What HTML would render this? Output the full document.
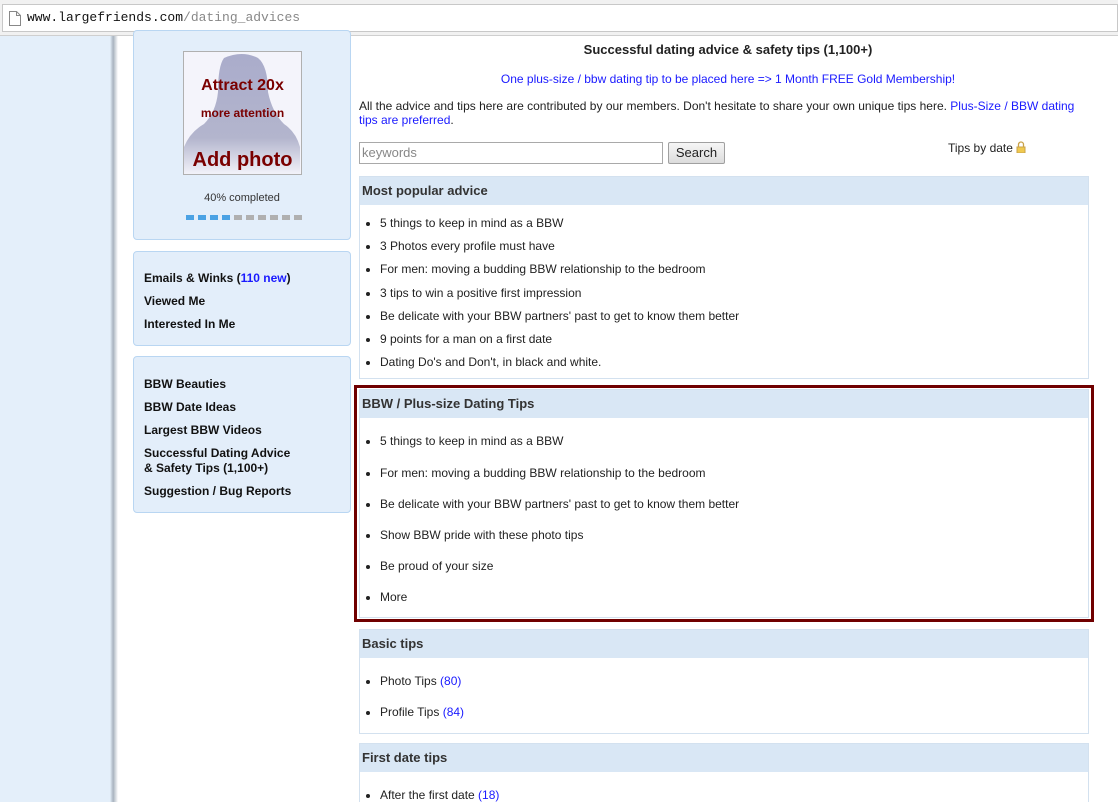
<!DOCTYPE html>
<html style="overflow:hidden"><head><meta charset="utf-8"><style>
*{margin:0;padding:0;box-sizing:border-box}
html,body{width:1118px;height:802px;overflow:hidden}
body{background:#fff;font-family:"Liberation Sans",Arial,sans-serif;font-size:12px;color:#222;position:relative}
.a{position:absolute}
.bar{left:0;top:0;width:1118px;height:36px;background:#f1f1f1;border-bottom:1px solid #cfcfcf}
.url{left:2px;top:4px;width:1116px;height:28px;background:#fff;border:1px solid #c8c8c8;font-family:"Liberation Mono",monospace;font-size:13px;line-height:26px;padding-left:24px;color:#111}
.side{left:0;top:36px;width:115px;height:766px;background:#e4effa}
.shadow{left:110px;top:36px;width:8px;height:766px;background:linear-gradient(90deg,#e4effa,#a9b3bf 40%,#fff)}
.box{background:#e3eefa;border:1px solid #b9d6f2;border-radius:4px;left:133px;width:218px}
.box b{display:block;position:absolute;left:10px;font-size:12px;color:#111}
.sec{left:359px;width:730px;border:1px solid #d3e1ef}
.sec h3{background:#d9e7f5;font-size:13px;height:28px;line-height:28px;padding-left:2px;color:#333}
.sec li{position:absolute;left:20px;font-size:12px;list-style:disc}
a{color:#1a1aff;text-decoration:none}
</style></head><body>
<div class="a bar"></div>
<div class="a url"><svg class="a" style="left:6px;top:6px" width="12" height="15"><path d="M.5 .5h7l4 4v10h-11z" fill="#fff" stroke="#888"/><path d="M7.5 .5v4h4" fill="none" stroke="#888"/></svg>www.largefriends.com<span style="color:#888">/dating_advices</span></div>
<div class="a side"></div><div class="a shadow"></div>

<div class="a box" style="top:30px;height:210px">
 <div class="a" style="left:49px;top:20px;width:119px;height:124px;border:1px solid #b0b0b0;background:#f4f4fb;overflow:hidden">
  <svg class="a" style="left:0;top:0" width="117" height="122"><defs><linearGradient id="g" x1="0" y1="0" x2="0" y2="1"><stop offset="0" stop-color="#aaaccb"/><stop offset=".7" stop-color="#b3b5cd"/><stop offset="1" stop-color="#f2f2f9"/></linearGradient></defs><path d="M40 6Q58 -2 74 6Q84 14 84 40Q88 60 100 72Q112 80 116 95V122H0V95Q6 80 20 72Q32 60 34 40Q34 14 40 6z" fill="url(#g)"/></svg>
  <div class="a" style="left:0;top:25px;width:117px;text-align:center;color:#7a0000;font-weight:bold;font-size:16px">Attract 20x</div>
  <div class="a" style="left:0;top:54px;width:117px;text-align:center;color:#7a0000;font-weight:bold;font-size:12px">more attention</div>
  <div class="a" style="left:0;top:97px;width:117px;text-align:center;color:#7a0000;font-weight:bold;font-size:20px">Add photo</div>
 </div>
 <div class="a" style="left:0;top:161px;width:216px;text-align:center;font-size:11px;color:#333">40% completed</div>
 <div class="a" style="left:52px;top:184px;width:120px;height:5px;background:repeating-linear-gradient(90deg,#4ba2e4 0 8px,transparent 8px 12px) 0 0/48px 5px no-repeat,repeating-linear-gradient(90deg,#b0b0b0 0 8px,transparent 8px 12px) 48px 0/72px 5px no-repeat"></div>
</div>

<div class="a box" style="top:251px;height:95px">
 <b style="top:19px">Emails &amp; Winks (<span style="color:#1a1aff">110 new</span>)</b>
 <b style="top:42px">Viewed Me</b>
 <b style="top:65px">Interested In Me</b>
</div>
<div class="a box" style="top:356px;height:157px">
 <b style="top:20px">BBW Beauties</b>
 <b style="top:43px">BBW Date Ideas</b>
 <b style="top:66px">Largest BBW Videos</b>
 <b style="top:89px;line-height:15px">Successful Dating Advice<br>&amp; Safety Tips (1,100+)</b>
 <b style="top:127px">Suggestion / Bug Reports</b>
</div>

<div class="a" style="left:359px;top:42px;width:738px;text-align:center;font-weight:bold;font-size:13px">Successful dating advice &amp; safety tips (1,100+)</div>
<div class="a" style="left:359px;top:72px;width:738px;text-align:center"><a>One plus-size / bbw dating tip to be placed here =&gt; 1 Month FREE Gold Membership!</a></div>
<div class="a" style="left:359px;top:99px;width:735px;line-height:14px">All the advice and tips here are contributed by our members. Don't hesitate to share your own unique tips here. <a>Plus-Size / BBW dating tips are preferred</a>.</div>
<div class="a" style="left:359px;top:142px;width:304px;height:22px;border:1px solid #a9a9a9;color:#888;font-size:13px;line-height:20px;padding-left:2px">keywords</div>
<div class="a" style="left:668px;top:142px;width:57px;height:22px;border:1px solid #a0a0a0;border-radius:2px;background:linear-gradient(#f6f6f6,#dcdcdc);text-align:center;line-height:20px;font-size:13px">Search</div>
<div class="a" style="left:948px;top:141px">Tips by date <svg width="10" height="12" style="vertical-align:-1px"><path d="M2.5 6V3.5a2.5 2.5 0 0 1 5 0V6" fill="none" stroke="#c9a24a" stroke-width="1.3"/><rect x="1" y="6" width="8" height="6" fill="#f0c94f" stroke="#c9a24a"/></svg></div>

<div class="a sec" style="top:176px;height:203px"><h3>Most popular advice</h3><ul>
<li style="top:39px">5 things to keep in mind as a BBW</li>
<li style="top:62px">3 Photos every profile must have</li>
<li style="top:85px">For men: moving a budding BBW relationship to the bedroom</li>
<li style="top:109px">3 tips to win a positive first impression</li>
<li style="top:132px">Be delicate with your BBW partners' past to get to know them better</li>
<li style="top:155px">9 points for a man on a first date</li>
<li style="top:178px">Dating Do's and Don't, in black and white.</li></ul></div>

<div class="a" style="left:354px;top:385px;width:740px;height:237px;border:3px solid #700000"></div>
<div class="a sec" style="top:389px;height:229px;width:730px"><h3>BBW / Plus-size Dating Tips</h3><ul>
<li style="top:44px">5 things to keep in mind as a BBW</li>
<li style="top:76px">For men: moving a budding BBW relationship to the bedroom</li>
<li style="top:107px">Be delicate with your BBW partners' past to get to know them better</li>
<li style="top:138px">Show BBW pride with these photo tips</li>
<li style="top:169px">Be proud of your size</li>
<li style="top:200px">More</li></ul></div>

<div class="a sec" style="top:629px;height:105px"><h3>Basic tips</h3><ul>
<li style="top:44px">Photo Tips <a>(80)</a></li>
<li style="top:75px">Profile Tips <a>(84)</a></li></ul></div>

<div class="a sec" style="top:743px;height:70px"><h3>First date tips</h3><ul>
<li style="top:44px">After the first date <a>(18)</a></li></ul></div>
</body></html>
